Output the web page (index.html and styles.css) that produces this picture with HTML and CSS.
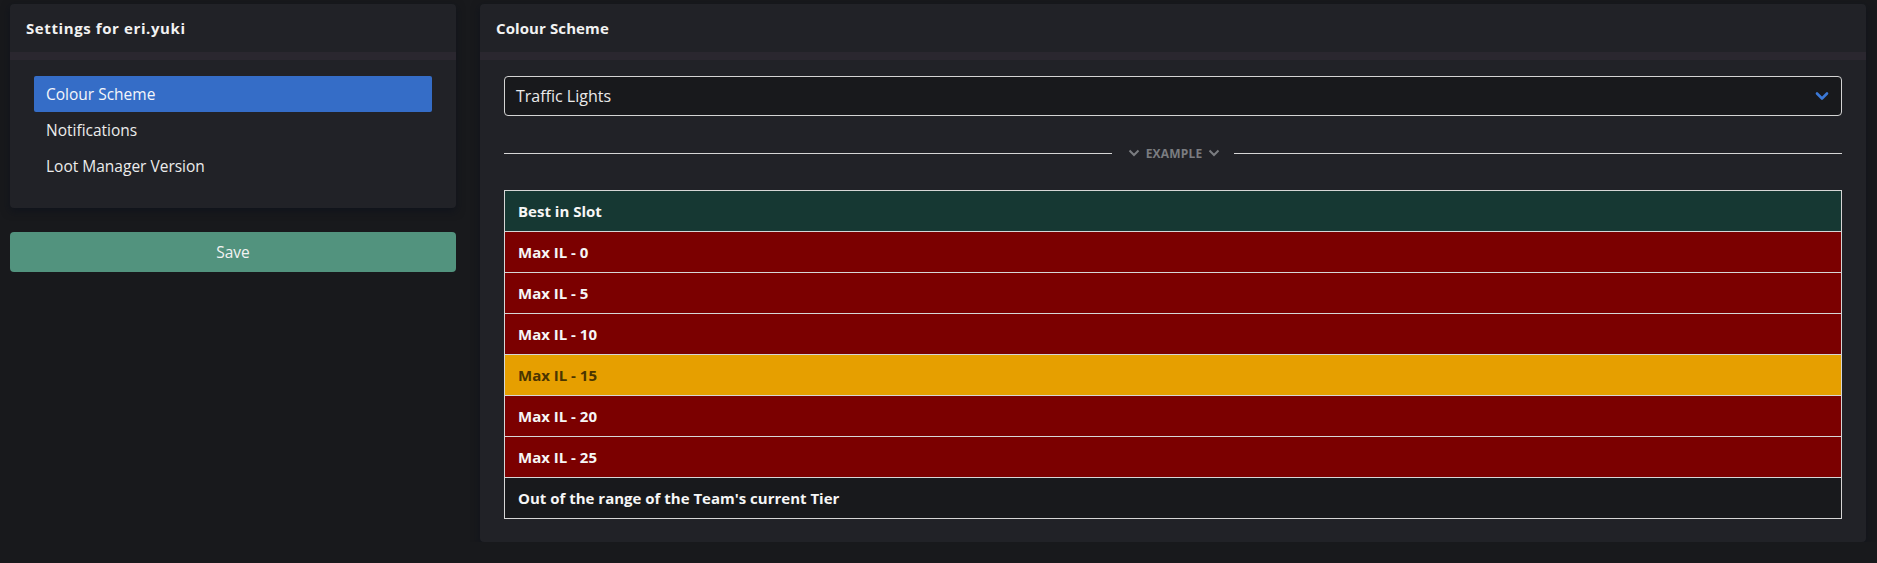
FILE: index.html
```html
<!DOCTYPE html>
<html>
<head>
<meta charset="utf-8">
<link rel="stylesheet" href="styles.css">
</head>
<body>
<div class="layout">
  <aside class="side">
    <section class="card side-card">
      <header class="card-head user-head">Settings for eri.yuki</header>
      <div class="card-body nav-body">
        <a class="nav-item active">Colour Scheme</a>
        <a class="nav-item">Notifications</a>
        <a class="nav-item">Loot Manager Version</a>
      </div>
    </section>
    <button class="save">Save</button>
  </aside>
  <main class="card main-card">
    <header class="card-head">Colour Scheme</header>
    <div class="card-body main-body">
      <div class="select">
        <span>Traffic Lights</span>
        <svg class="select-chev" width="14" height="10" viewBox="0 0 14 10"><path d="M2 2.5 L7 7.5 L12 2.5" fill="none" stroke="#3b78d6" stroke-width="2.6" stroke-linecap="round" stroke-linejoin="round"/></svg>
      </div>
      <div class="divider">
        <span class="line"></span>
        <span class="div-label">
          <svg width="12" height="8" viewBox="0 0 12 8"><path d="M1.5 1.5 L6 6 L10.5 1.5" fill="none" stroke="#7a7c80" stroke-width="2"/></svg>
          EXAMPLE
          <svg width="12" height="8" viewBox="0 0 12 8"><path d="M1.5 1.5 L6 6 L10.5 1.5" fill="none" stroke="#7a7c80" stroke-width="2"/></svg>
        </span>
        <span class="line"></span>
      </div>
      <div class="table">
        <div class="row bis">Best in Slot</div>
        <div class="row red">Max IL - 0</div>
        <div class="row red">Max IL - 5</div>
        <div class="row red">Max IL - 10</div>
        <div class="row amber">Max IL - 15</div>
        <div class="row red">Max IL - 20</div>
        <div class="row red">Max IL - 25</div>
        <div class="row out">Out of the range of the Team's current Tier</div>
      </div>
    </div>
  </main>
</div>
</body>
</html>
```

FILE: styles.css
```css
* { box-sizing: border-box; }
html, body {
  margin: 0;
  padding: 0;
  background: #18191c;
  color: #f2f2f2;
  font-family: "Open Sans", "Noto Sans", sans-serif;
}
.layout {
  display: flex;
  align-items: flex-start;
  gap: 24px;
  padding: 4px 11px 0 10px;
}
.side {
  width: 446px;
  flex: none;
  display: flex;
  flex-direction: column;
  gap: 24px;
}
.card {
  background: #212227;
  border-radius: 4px;
  box-shadow: 0 3px 8px rgba(10, 14, 28, 0.55);
}
.card-head {
  height: 56px;
  padding: 0 16px;
  display: flex;
  align-items: center;
  border-bottom: 8px solid #2a272f;
  font-weight: 700;
  font-size: 15px;
  letter-spacing: 0.1px;
}
.user-head {
  letter-spacing: 0.6px;
}
.nav-body {
  padding: 16px 24px 24px;
  display: flex;
  flex-direction: column;
}
.nav-item {
  height: 36px;
  display: flex;
  align-items: center;
  padding: 0 12px;
  font-size: 15.5px;
  color: #ececec;
  border-radius: 2px;
}
.nav-item.active {
  background: #356dc7;
  color: #f4f6fa;
}
.save {
  height: 40px;
  border: none;
  border-radius: 4px;
  background: #52937e;
  color: #f2f2f2;
  font-family: inherit;
  font-size: 15.5px;
}
.main-card {
  flex: 1;
  min-width: 0;
}
.main-body {
  padding: 16px 24px 23px;
}
.select {
  height: 40px;
  border: 1px solid #d4d4d4;
  border-radius: 4px;
  background: #18191c;
  display: flex;
  align-items: center;
  justify-content: space-between;
  padding: 0 10px 0 11px;
  font-size: 16px;
  color: #eaeaea;
}
.select-chev { margin-right: 2px; }
.divider {
  display: flex;
  align-items: center;
  height: 24px;
  margin: 25px 0;
}
.line {
  flex: 1;
  height: 1px;
  background: #d6d6d6;
}
.div-label {
  display: flex;
  align-items: center;
  gap: 6px;
  padding: 0 14px 0 16px;
  font-size: 12px;
  font-weight: 700;
  color: #7a7c80;
  letter-spacing: 0.2px;
}
.table {
  border: 1px solid #d6d6d6;
  border-bottom: none;
}
.row {
  height: 41px;
  border-bottom: 1px solid #d6d6d6;
  display: flex;
  align-items: center;
  padding: 0 13px;
  font-weight: 700;
  font-size: 15px;
  color: #f6f6f6;
}
.row.bis { background: #163833; }
.row.red { background: #7b0000; }
.row.amber { background: #e69f00; color: #4a3500; }
.row.out { background: #18191c; }
```
